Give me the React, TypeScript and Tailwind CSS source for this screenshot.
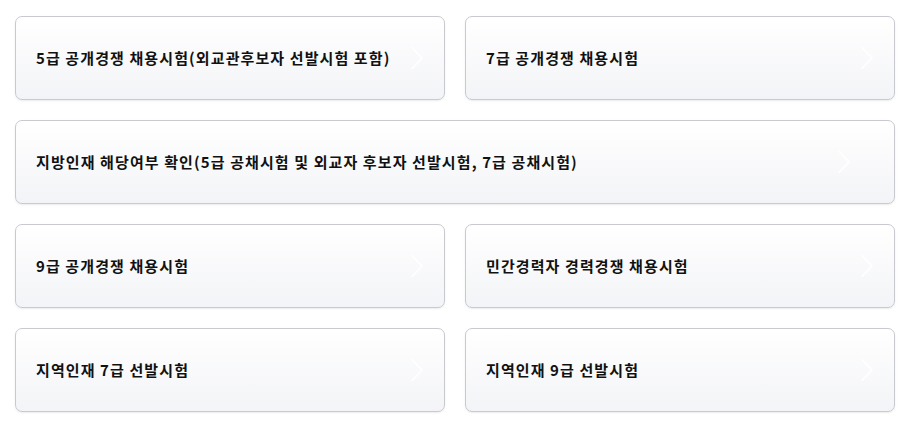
import React from 'react';

// 시험 종류 목록
interface ExamItem {
  label: string;
  wide?: boolean;
}

const exams: ExamItem[] = [
  { label: '5급 공개경쟁 채용시험(외교관후보자 선발시험 포함)' },
  { label: '7급 공개경쟁 채용시험' },
  { label: '지방인재 해당여부 확인(5급 공채시험 및 외교자 후보자 선발시험, 7급 공채시험)', wide: true },
  { label: '9급 공개경쟁 채용시험' },
  { label: '민간경력자 경력경쟁 채용시험' },
  { label: '지역인재 7급 선발시험' },
  { label: '지역인재 9급 선발시험' },
];

const Chevron: React.FC = () => (
  <svg width="12" height="24" viewBox="0 0 12 24" fill="none" className="shrink-0">
    <path d="M1 1.5 L11 12 L1 22.5" stroke="#ffffff" strokeWidth="1.6" strokeLinecap="round" strokeLinejoin="round" />
  </svg>
);

const ExamCard: React.FC<{ item: ExamItem }> = ({ item }) => (
  <a
    href="#"
    className={`h-[84px] flex items-center justify-between pl-[20px] pr-[5%] rounded-[7px] border border-[#c8cad0] bg-gradient-to-b from-white to-[#f3f4f7] shadow-[0_1px_2px_rgba(0,0,0,0.08)] ${item.wide ? 'col-span-2' : ''}`}
  >
    <span className="text-[15px] font-bold text-[#111] tracking-[1.1px]">{item.label}</span>
    <Chevron />
  </a>
);

const App: React.FC = () => {
  return (
    <div
      className="w-[906px] h-[431px] bg-white px-[15px] pt-[16px]"
      style={{ fontFamily: '"Noto Sans CJK KR", "Noto Sans", sans-serif' }}
    >
      <div className="grid grid-cols-2 gap-x-[20px] gap-y-[20px] w-[880px]">
        {exams.map((item) => (
          <ExamCard key={item.label} item={item} />
        ))}
      </div>
    </div>
  );
};

export default App;
